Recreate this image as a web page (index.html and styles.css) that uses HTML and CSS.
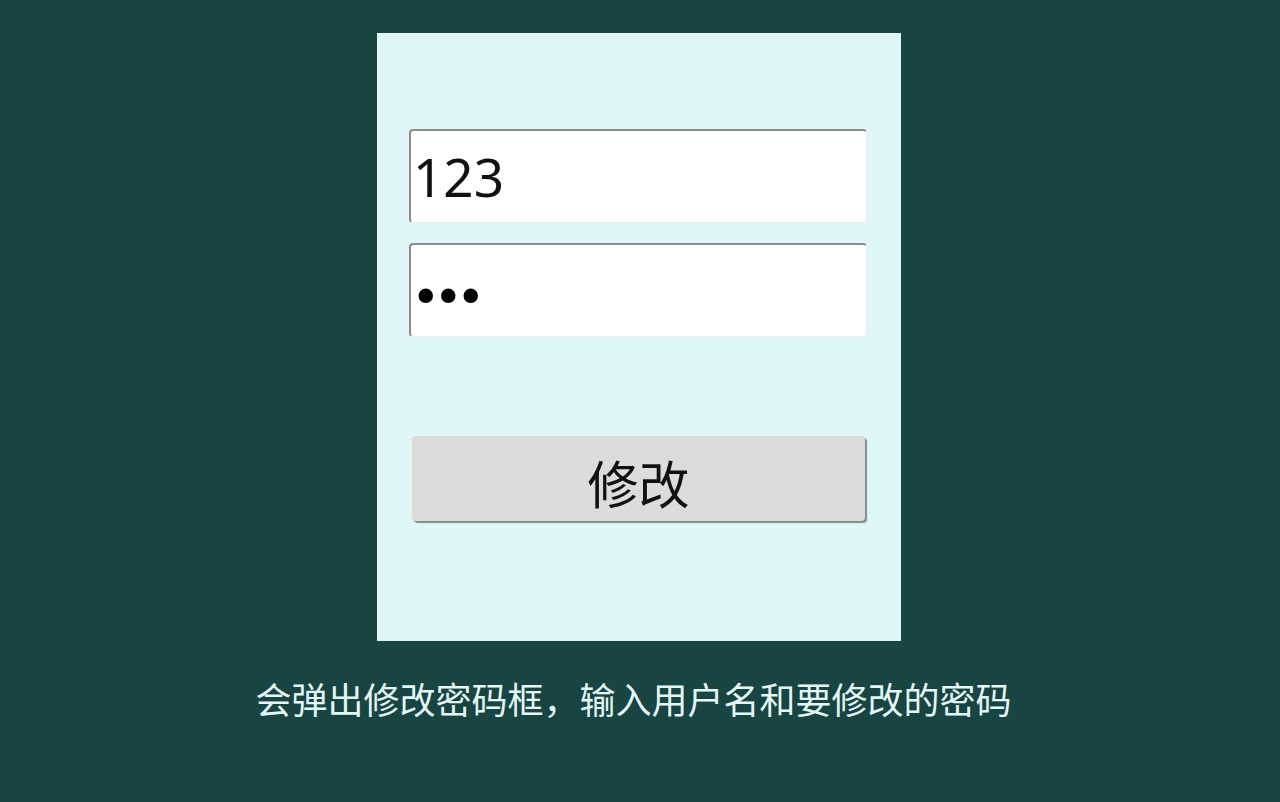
FILE: index.html
```html
<!DOCTYPE html>
<html lang="zh-CN">
<head>
<meta charset="utf-8">
<title>修改密码</title>
<link rel="stylesheet" href="styles.css">
</head>
<body>
<main class="page">
  <form class="panel">
    <input class="field" type="text" value="123">
    <input class="field field-pass" type="password" value="123">
    <button class="submit" type="button">修改</button>
  </form>
  <p class="caption">会弹出修改密码框，输入用户名和要修改的密码</p>
</main>
</body>
</html>
```
FILE: styles.css
```css
html, body {
  margin: 0;
  padding: 0;
}
body {
  background: #184442;
  font-family: "Noto Sans", "Noto Sans CJK SC", sans-serif;
  width: 1280px;
  height: 802px;
  overflow: hidden;
}
.page {
  display: flex;
  flex-direction: column;
  padding-top: 33px;
}
.panel {
  margin: 0 0 0 377px;
  width: 524px;
  height: 608px;
  box-sizing: border-box;
  background: #dff7f7;
  padding: 96px 0 0 32px;
  display: flex;
  flex-direction: column;
  align-items: flex-start;
}
.field {
  width: 458px;
  height: 94px;
  box-sizing: border-box;
  margin: 0;
  padding: 0 0 0 2px;
  border-style: solid;
  border-width: 2px 1px 1px 2px;
  border-color: #8c8c8c #ececec #ececec #8c8c8c;
  border-radius: 4px;
  background: #ffffff;
  color: #111;
  font-family: "Noto Sans", "Noto Sans CJK SC", sans-serif;
  font-size: 53px;
  outline: none;
}
.field + .field {
  margin-top: 20px;
}
.field-pass {
  font-family: "DejaVu Sans", sans-serif;
  font-size: 50px;
  letter-spacing: -7px;
  padding: 12px 0 0 0;
  color: #000;
}
.submit {
  margin: 99px 0 0 3px;
  width: 453px;
  height: 85px;
  border: none;
  border-radius: 4px;
  background: #dcdcdc;
  box-shadow: 2px 2px 1px #8a8a8a;
  color: #111;
  font-family: "Noto Sans CJK SC", sans-serif;
  font-size: 51px;
  padding: 8px 0 0 0;
  line-height: 1;
}
.caption {
  margin: 38px 0 0 0;
  padding-right: 13px;
  text-align: center;
  color: #e4f6f6;
  font-family: "Noto Sans CJK SC", sans-serif;
  font-size: 36px;
  line-height: 1.1;
}
```
